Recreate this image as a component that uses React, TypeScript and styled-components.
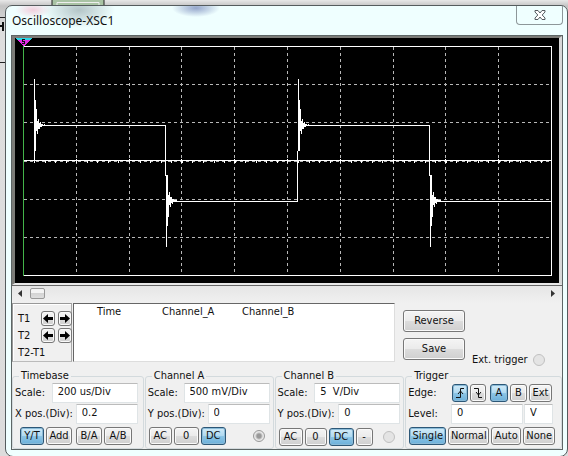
import React, { useState } from "react";
import styled, { createGlobalStyle, css } from "styled-components";

const Global = createGlobalStyle`
  * { box-sizing: border-box; }
  html, body { margin: 0; }
  body {
    min-height: 100vh;
    overflow: hidden;
    background: linear-gradient(to bottom, #e8e8e8 0, #c4c4c4 6px, #dedede 30px, #dcdcdc);
    color: #111;
    font: 11px/14px "DejaVu Sans Condensed", "Noto Sans", sans-serif;
  }
  button, input, table { font: inherit; color: inherit; }
`;

const Desktop = styled.div`
  position: relative;
  min-height: 100vh;
  padding: 5px 0 0 5px;
`;

const Backdrop = styled.svg`
  position: absolute;
  left: 0;
  top: 0;
`;

const Window = styled.section`
  position: relative;
  padding: 0 4px 6px 5px;
  border: 1px solid #555c5e;
  border-radius: 7px 7px 8px 8px;
  background:
    radial-gradient(ellipse 18px 8px at 27px 4px, #f3b8ccaa, transparent),
    radial-gradient(ellipse 36px 18px at 73px 4px, #7f929688, transparent),
    radial-gradient(ellipse 24px 9px at 190px 2px, #7385b8bb, transparent),
    #efffff;
`;

const TitleBar = styled.header`
  display: flex;
  justify-content: space-between;
  align-items: flex-start;
  height: 29px;
`;

const Title = styled.h1`
  margin: 0;
  padding: 6px 0 0 1px;
  font: 12px/18px "Noto Sans", "Open Sans", sans-serif;
  color: #111;
`;

const CloseButton = styled.button`
  display: flex;
  align-items: center;
  justify-content: center;
  width: 47px;
  height: 19px;
  padding: 0;
  border: 1px solid #8d9799;
  border-top: 0;
  border-radius: 0 0 4px 4px;
  background: transparent;
`;

const Client = styled.main`
  border: 1px solid #5d6666;
  background: #f0f0f0;
`;

const Scope = styled.div`
  border: solid;
  border-width: 2px 3px 2px 3px;
  border-color: #7c7c78 #d8d8d8 #e8e8e8 #7c7c78;
  background: #000;
`;

const ScopeSvg = styled.svg`
  display: block;
  width: 100%;
  height: auto;
`;

const ScrollBar = styled.div`
  display: flex;
  align-items: center;
  gap: 7px;
  height: 18px;
  padding: 0 6px 3px 5px;
  border-top: 1px solid #666;
  background: linear-gradient(#e6e6e6, #f0f0f0);
`;

const ScrollArrow = styled.button`
  display: flex;
  padding: 0;
  border: 0;
  background: none;
`;

const Track = styled.div`
  flex: 1;
`;

const Thumb = styled.div`
  width: 15px;
  height: 11px;
  border: 1px solid #999;
  border-radius: 2px;
  background: linear-gradient(#f4f4f4 45%, #d4d4d4 50%, #dedede);
`;

const Readout = styled.div`
  display: flex;
  height: 59px;
`;

const Cursors = styled.div`
  display: grid;
  grid-template-columns: 20px 17px 17px;
  grid-template-rows: 17px 17px 1fr;
  align-items: center;
  width: 60px;
  padding: 6px 0 0 5px;
  border: 1px solid #999;
  border-color: #999 #a8a8a8 #bbb #999;
  box-shadow: inset 1px 1px #fff;
`;

const CursorName = styled.span<{ $wide?: boolean }>`
  ${(p) => p.$wide && css`grid-column: 1 / -1;`}
`;

const face = css<{ $on?: boolean }>`
  border: 1px solid ${(p) => (p.$on ? "#2c5777" : "#777")};
  border-radius: 3px;
  background: ${(p) =>
    p.$on
      ? "linear-gradient(#d3ebf8, #b0daf1 48%, #8cc5e6 52%, #6cb0da)"
      : "linear-gradient(#f4f4f4, #ebebeb 48%, #dcdcdc 52%, #cfcfcf)"};
  box-shadow: inset 0 0 0 1px ${(p) => (p.$on ? "#8abbd8" : "#fafafa")};
`;

const ArrowButton = styled.button`
  ${face}
  display: flex;
  align-items: center;
  justify-content: center;
  justify-self: end;
  width: 14px;
  height: 15px;
  padding: 0;
`;

const ReadoutList = styled.div`
  flex: 1;
  margin-left: 1px;
  border: 1px solid #666;
  border-right-color: #ddd;
  border-bottom-color: #ddd;
  background: #fff;
`;

const ReadoutTable = styled.table`
  border-collapse: collapse;
  margin: 1px 0 0 23px;

  th {
    padding: 0;
    text-align: left;
    font-weight: normal;
  }
  th:first-child { width: 65px; }
  th + th { width: 80px; }
`;

const Actions = styled.div`
  display: flex;
  flex-direction: column;
  gap: 6px;
  width: 70px;
  padding: 7px 0 0 8px;
`;

const ActionButton = styled.button`
  ${face}
  height: 22px;
  padding: 0;
`;

const External = styled.label`
  display: flex;
  align-items: center;
  align-self: flex-end;
  justify-content: space-between;
  width: 97px;
  padding: 0 17px 0 7px;
  margin-bottom: -5px;
`;

const Radio = styled.input`
  appearance: none;
  flex: none;
  width: 12px;
  height: 12px;
  margin: 0;
  border: 1px solid #c0c0c0;
  border-radius: 50%;
  background: #e4e4e4;

  &:checked {
    border-color: #999;
    background: radial-gradient(circle, #999 0 2px, #e8e8e8 4px);
  }
`;

const Groups = styled.div`
  display: grid;
  grid-template-columns: 132fr 129fr 130fr 157fr;
  gap: 1px;
  padding: 7px 0 0;
`;

const Group = styled.fieldset<{ $inset?: number }>`
  min-width: 0;
  margin: 0;
  padding: 0 ${(p) => p.$inset ?? 3}px 2px 2px;
  border: 1px solid #d3dadd;
  border-radius: 3px;
`;

const Legend = styled.legend`
  margin-left: 4px;
  padding: 0 2px;
`;

const Field = styled.div`
  display: flex;
  justify-content: space-between;
  align-items: center;
  height: 19px;
  margin-bottom: 2px;
  white-space: nowrap;
`;

const TextBox = styled.input<{ $w: number }>`
  width: ${(p) => p.$w}px;
  height: 20px;
  padding: 0 5px 2px;
  border: 1px solid #dfe4e6;
  border-top-color: #bbb;
  border-radius: 1px;
  background: #fff;
`;

const LevelInputs = styled.div`
  display: flex;
  gap: 1px;
  padding-right: 5px;
`;

const EdgeButtons = styled.div`
  display: flex;
  gap: 2px;
  padding-right: 6px;
`;

const Modes = styled.div<{ $left?: number; $low?: boolean }>`
  display: flex;
  align-items: center;
  gap: 2px;
  padding-left: ${(p) => p.$left ?? 1}px;
  padding-top: ${(p) => (p.$low ? 3 : 2)}px;
`;

const Mode = styled.button<{ $on?: boolean; $w: number; $gap?: boolean }>`
  ${face}
  display: flex;
  align-items: center;
  justify-content: center;
  width: ${(p) => p.$w}px;
  height: 18px;
  padding: 0;
  margin-left: ${(p) => (p.$gap ? 2 : 0)}px;
`;

const ChannelRadio = styled(Radio)`
  margin-left: auto;
  margin-right: 5px;
`;

type Item = { label: string; w: number; gap?: boolean };

function ModeButtons({ items, initial }: { items: Item[]; initial: string }) {
  const [active, setActive] = useState(initial);
  return (
    <>
      {items.map((i) => (
        <Mode key={i.label} type="button" $w={i.w} $gap={i.gap} $on={active === i.label}
          aria-pressed={active === i.label} onClick={() => setActive(i.label)}>
          {i.label}
        </Mode>
      ))}
    </>
  );
}

function Entry({ id, label, value, w }: { id: string; label: string; value: string; w: number }) {
  return (
    <Field>
      <label htmlFor={id}>{label}</label>
      <TextBox id={id} defaultValue={value} $w={w} />
    </Field>
  );
}

function Arrow({ right }: { right?: boolean }) {
  return (
    <svg width="10" height="9" viewBox="0 0 10 9" aria-hidden="true">
      <path d={right ? "M10 4.5 5 0v3H0v3h5v3z" : "M0 4.5 5 0v3h5v3H5v3z"} fill="#000" />
    </svg>
  );
}

const columns = [76, 129, 181, 234, 287, 340, 393, 445, 498];
const rows = [84, 122, 199, 237];
const ticks = Array.from({ length: 49 }, (_, i) => Math.round(34 + i * 10.56));

function Burst({ x, y, dir }: { x: number; y: number; dir: 1 | -1 }) {
  const spans = [[-46, 26], [-25, 26], [-16, 6], [-4, 9], [-6, 4], [-2, 4], [-3, 2], [-1, 2], [-1, 1], [0, 1], [-1, 1]];
  return (
    <path
      d={spans.map(([a, b], i) => `M${x + i + 0.5} ${y + a * dir}V${y + b * dir}`).join("")}
      stroke="#fff"
    />
  );
}

function Trace() {
  return (
    <ScopeSvg viewBox="15 38 544 245" shapeRendering="crispEdges" role="img" aria-label="Waveform">
      <g stroke="#b8b8b8" strokeDasharray="3 3" fill="none">
        {columns.map((x) => <path key={x} d={`M${x + 0.5} 47V275`} />)}
        {rows.map((y) => <path key={y} d={`M24 ${y + 0.5}H551`} />)}
        <path d="M24 161.5H551" />
      </g>
      <g stroke="#fff" fill="none">
        <path d="M23 46.5H551.5V275.5H23M24 160.5H551" />
        {ticks.map((x) => <path key={x} d={`M${x + 0.5} 161V163`} />)}
        {columns.map((x) => <path key={x} d={`M${x + 0.5} 159V163`} />)}
        <path d="M34.5 160V125.5M40 125.5H165.5V176M172 201.5H297.5V151M304 125.5H429.5V176M436 201.5H551" />
      </g>
      <Burst x={34} y={125} dir={1} />
      <Burst x={166} y={201} dir={-1} />
      <Burst x={298} y={125} dir={1} />
      <Burst x={430} y={201} dir={-1} />
      <path d="M23 46h1v230h-1z" fill="#43b349" />
      <path d="M15 38H32L24 46H23z" fill="#e32be6" />
      <path d="M15 38H32L30 40H17z" fill="#28d8e8" />
      <path d="M22 39h3v1h-3zM22 41h3v1h-3zM22 43h3v1h-3zM22 40h1v1h-1zM24 42h1v1h-1z" fill="#111" />
    </ScopeSvg>
  );
}

export default function App() {
  const [edge, setEdge] = useState("rising");
  return (
    <Desktop>
      <Global />
      <Backdrop width="120" height="90" aria-hidden="true">
        <path d="M52 0H104V8H52z" fill="#a9c3a4" />
        <path d="M52 0V8M104 0V8M0 17.500H5M0 62.500H5" stroke="#222" />
        <path d="M57 8V2.500H99V8" stroke="#eee" fill="none" />
        <path d="M0 26H4M3 22V31" stroke="#111" strokeWidth="2" />
      </Backdrop>
      <Window>
        <TitleBar>
          <Title>Oscilloscope-XSC1</Title>
          <CloseButton type="button" aria-label="Close">
            <svg width="12" height="10" viewBox="0 0 12 10" aria-hidden="true">
              <path d="M1 .5H4L6 3 8 .5H11V2L8.200 5 11 8V9.500H8L6 7 4 9.500H1V8L3.800 5 1 2z" fill="#fff" stroke="#555b60" />
            </svg>
          </CloseButton>
        </TitleBar>
        <Client>
          <Scope><Trace /></Scope>
          <ScrollBar>
            <ScrollArrow type="button" aria-label="Scroll left">
              <svg width="6" height="7"><path d="M5 0V7L1 3.500z" fill="#333" /></svg>
            </ScrollArrow>
            <Track><Thumb /></Track>
            <ScrollArrow type="button" aria-label="Scroll right">
              <svg width="6" height="7"><path d="M1 0V7L5 3.500z" fill="#333" /></svg>
            </ScrollArrow>
          </ScrollBar>
          <Readout>
            <Cursors>
              <CursorName>T1</CursorName>
              <ArrowButton type="button" aria-label="T1 left"><Arrow /></ArrowButton>
              <ArrowButton type="button" aria-label="T1 right"><Arrow right /></ArrowButton>
              <CursorName>T2</CursorName>
              <ArrowButton type="button" aria-label="T2 left"><Arrow /></ArrowButton>
              <ArrowButton type="button" aria-label="T2 right"><Arrow right /></ArrowButton>
              <CursorName $wide>T2-T1</CursorName>
            </Cursors>
            <ReadoutList>
              <ReadoutTable>
                <thead><tr><th>Time</th><th>Channel_A</th><th>Channel_B</th></tr></thead>
              </ReadoutTable>
            </ReadoutList>
            <Actions>
              <ActionButton type="button">Reverse</ActionButton>
              <ActionButton type="button">Save</ActionButton>
            </Actions>
            <External>Ext. trigger<Radio type="radio" name="source" /></External>
          </Readout>
          <Groups>
            <Group $inset={5}>
              <Legend>Timebase</Legend>
              <Entry id="tb-scale" label="Scale:" value="200 us/Div" w={86} />
              <Entry id="tb-pos" label="X pos.(Div):" value="0.2" w={62} />
              <Modes $left={5}>
                <ModeButtons initial="Y/T" items={[{ label: "Y/T", w: 24 }, { label: "Add", w: 26 }, { label: "B/A", w: 26, gap: true }, { label: "A/B", w: 28 }]} />
              </Modes>
            </Group>
            <Group>
              <Legend>Channel A</Legend>
              <Entry id="a-scale" label="Scale:" value="500 mV/Div" w={86} />
              <Entry id="a-pos" label="Y pos.(Div):" value="0" w={62} />
              <Modes>
                <ModeButtons initial="DC" items={[{ label: "AC", w: 23 }, { label: "0", w: 25 }, { label: "DC", w: 25 }]} />
                <ChannelRadio type="radio" name="source" defaultChecked aria-label="Channel A trigger" />
              </Modes>
            </Group>
            <Group>
              <Legend>Channel B</Legend>
              <Entry id="b-scale" label="Scale:" value="5  V/Div" w={86} />
              <Entry id="b-pos" label="Y pos.(Div):" value="0" w={62} />
              <Modes $low>
                <ModeButtons initial="DC" items={[{ label: "AC", w: 24 }, { label: "0", w: 22 }, { label: "DC", w: 25 }, { label: "-", w: 17 }]} />
                <ChannelRadio type="radio" name="source" aria-label="Channel B trigger" />
              </Modes>
            </Group>
            <Group>
              <Legend>Trigger</Legend>
              <Field>
                <span>Edge:</span>
                <EdgeButtons>
                  <Mode type="button" $w={16} $on={edge === "rising"} aria-label="Rising edge" onClick={() => setEdge("rising")}>
                    <svg width="10" height="12" viewBox="0 0 10 12"><path d="M1 10.500H5.500V1.500H9M3 7l2.500-3L8 7" stroke="#111" fill="none" /></svg>
                  </Mode>
                  <Mode type="button" $w={16} $on={edge === "falling"} aria-label="Falling edge" onClick={() => setEdge("falling")}>
                    <svg width="10" height="12" viewBox="0 0 10 12"><path d="M1 1.500H5.500V10.500H9M3 5l2.500 3L8 5" stroke="#111" fill="none" /></svg>
                  </Mode>
                  <ModeButtons initial="A" items={[{ label: "A", w: 18, gap: true }, { label: "B", w: 17 }, { label: "Ext", w: 23 }]} />
                </EdgeButtons>
              </Field>
              <Field>
                <label htmlFor="level">Level:</label>
                <LevelInputs>
                  <TextBox id="level" defaultValue="0" $w={72} />
                  <TextBox defaultValue="V" $w={29} aria-label="Level unit" />
                </LevelInputs>
              </Field>
              <Modes>
                <ModeButtons initial="Single" items={[{ label: "Single", w: 37 }, { label: "Normal", w: 41 }, { label: "Auto", w: 30 }, { label: "None", w: 32 }]} />
              </Modes>
            </Group>
          </Groups>
        </Client>
      </Window>
    </Desktop>
  );
}
